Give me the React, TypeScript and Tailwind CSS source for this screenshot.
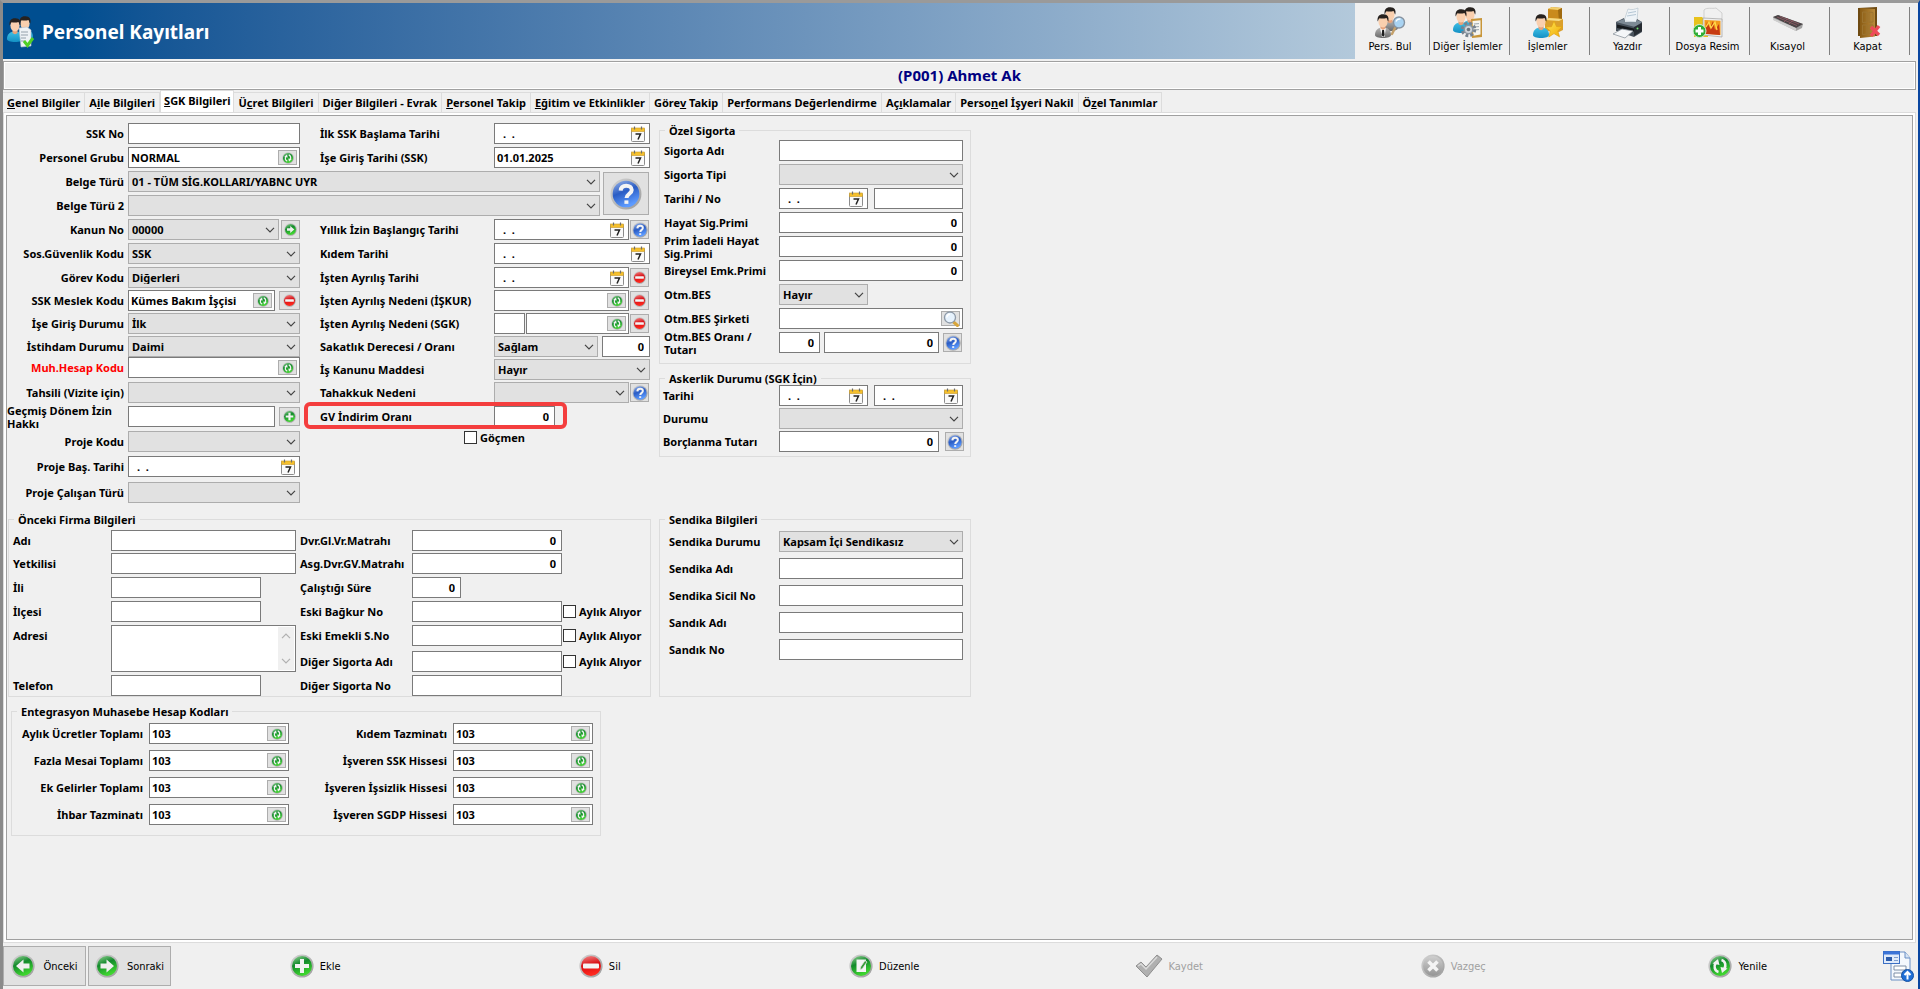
/**
 * Personel Kayıtları ekranı - SGK Bilgileri sekmesi.
 *
 * - Üstte başlık ve araç çubuğu, altında seçili personel.
 * - Ortada sekmeler ve form grupları.
 * - Altta kayıt gezinme / düzenleme düğmeleri.
 */

import { useId, type ReactNode } from 'react';

// ---- İkonlar ----

function Tanimlar() {
  return (
    <svg width="0" height="0" className="absolute" aria-hidden="true">
      <defs>
        <linearGradient id="yesil" x1="0" y1="0" x2="0.4" y2="1">
          <stop offset="0" stopColor="#9ad69a" />
          <stop offset="0.45" stopColor="#138a2c" />
          <stop offset="1" stopColor="#3fd62f" />
        </linearGradient>
        <linearGradient id="kirmizi" x1="0" y1="0" x2="0.2" y2="1">
          <stop offset="0" stopColor="#f28a8a" />
          <stop offset="0.5" stopColor="#d80d12" />
          <stop offset="1" stopColor="#ff2a20" />
        </linearGradient>
        <linearGradient id="mavi" x1="0" y1="0" x2="0.4" y2="1">
          <stop offset="0" stopColor="#9db8ea" />
          <stop offset="0.5" stopColor="#2a5cc4" />
          <stop offset="1" stopColor="#5d9bff" />
        </linearGradient>
        <linearGradient id="gri" x1="0" y1="0" x2="0" y2="1">
          <stop offset="0" stopColor="#cfcfcf" />
          <stop offset="1" stopColor="#959595" />
        </linearGradient>
        <linearGradient id="halka" x1="0" y1="0" x2="1" y2="1">
          <stop offset="0" stopColor="#d4d4d4" />
          <stop offset="1" stopColor="#9b9b9b" />
        </linearGradient>
        <linearGradient id="govde" x1="0" y1="0" x2="0" y2="1">
          <stop offset="0" stopColor="#3fc0e6" />
          <stop offset="1" stopColor="#1390c4" />
        </linearGradient>
        <linearGradient id="takim" x1="0" y1="0" x2="0" y2="1">
          <stop offset="0" stopColor="#b4b4b4" />
          <stop offset="1" stopColor="#6a6a6a" />
        </linearGradient>
        <linearGradient id="altin" x1="0" y1="0" x2="1" y2="1">
          <stop offset="0" stopColor="#ffe95a" />
          <stop offset="1" stopColor="#f0a800" />
        </linearGradient>
        <linearGradient id="kapi" x1="0" y1="0" x2="1" y2="0">
          <stop offset="0" stopColor="#8a5c14" />
          <stop offset="1" stopColor="#b98a3a" />
        </linearGradient>
      </defs>
    </svg>
  );
}

type OrbTuru = 'yenile' | 'ileri' | 'geri' | 'ekle' | 'sil' | 'soru' | 'duzenle' | 'vazgec';

const orbRenk: Record<OrbTuru, string> = {
  yenile: 'url(#yesil)',
  ileri: 'url(#yesil)',
  geri: 'url(#yesil)',
  ekle: 'url(#yesil)',
  duzenle: 'url(#yesil)',
  sil: 'url(#kirmizi)',
  soru: 'url(#mavi)',
  vazgec: 'url(#gri)',
};

function Orb({ tur, className = 'size-3' }: { tur: OrbTuru; className?: string }) {
  return (
    <svg viewBox="0 0 24 24" className={`shrink-0 ${className}`} aria-hidden="true">
      <circle cx="12" cy="12" r="11.6" fill="url(#halka)" />
      <circle cx="12" cy="12" r="10" fill={orbRenk[tur]} />
      {tur === 'yenile' && (
        <g>
          <path d="M10.5 18C6.500 17 5.500 12 8 8.500M13.500 6c4 1 5 6 2.500 9.500" fill="none" stroke="#f2f2f2" strokeWidth="2.600" />
          <path d="M4.500 9.500L10 5l1.500 6zM19.500 14.500L14 19l-1.500-6z" fill="#f2f2f2" />
        </g>
      )}
      {tur === 'ileri' && <path d="M5.500 9.500h6v-4L19 12l-7.500 6.500v-4h-6z" fill="#f0f0f0" />}
      {tur === 'geri' && <path d="M18.500 9.500h-6v-4L5 12l7.500 6.500v-4h6z" fill="#f0f0f0" />}
      {tur === 'ekle' && <path d="M10 5h4v5h5v4h-5v5h-4v-5H5v-4h5z" fill="#f2f2f2" />}
      {tur === 'sil' && <rect x="4" y="9.500" width="16" height="5" rx="1" fill="#f4f4f4" />}
      {tur === 'soru' && (
        <g fill="none" stroke="#f4f4f4" strokeWidth="3">
          <path d="M8 9.500c.2-2.500 2-3.700 4.200-3.700 2.400 0 4.100 1.200 4.100 3.200 0 2.800-3.700 2.800-3.900 6" />
          <path d="M12.300 16.800v2.600" />
        </g>
      )}
      {tur === 'duzenle' && (
        <g>
          <path d="M7.500 5.500H17V18H7.500z" fill="#f4f4f4" />
          <path d="M11 16l.5-3L16 6.500l2 1.500-4.500 6.500z" fill="#3c9c3c" stroke="#e9e9e9" strokeWidth="0.800" />
        </g>
      )}
      {tur === 'vazgec' && (
        <path d="M7.500 7.500l9 9M16.500 7.500l-9 9" stroke="#f4f4f4" strokeWidth="3.600" fill="none" />
      )}
    </svg>
  );
}

function Kisi({ x = 0, y = 0, govde = 'url(#govde)' }: { x?: number; y?: number; govde?: string }) {
  return (
    <g transform={`translate(${x} ${y})`}>
      <path d="M0 21c0-5 3-7.500 8-7.500s8 2.500 8 7.500c0 2-3.500 3-8 3s-8-1-8-3z" fill={govde} />
      <path d="M5.500 11h5v4c-1.500 1.500-3.500 1.500-5 0z" fill="#e7a27a" />
      <ellipse cx="8" cy="7.500" rx="4.600" ry="6" fill="#f9cfae" />
      <path d="M2.600 7.500C2 2.500 4.500 0 8.500.3c4.200.2 5.800 3 4.800 7.200-1-.8-1-2.500-1.800-3.500-2.500.8-5 .7-7 .2-1 .8-1.100 2.300-1.900 3.300z" fill="#27221f" />
    </g>
  );
}

function BaslikIkonu() {
  return (
    <svg viewBox="0 0 32 32" className="size-8 shrink-0" aria-hidden="true">
      <Kisi x={11} y={0} />
      <Kisi x={1} y={2} />
      <path d="M13 12l8-1 4 3v16l-10 1z" fill="#eef2f6" stroke="#b5bec7" strokeWidth="0.600" />
      <path d="M15 16h7M15 19h7M15 22h5M15 25h4" stroke="#94a0ab" strokeWidth="1" />
      <path d="M18 25l3.500 4.500L27 22" stroke="#4fcf25" strokeWidth="3" fill="none" />
    </svg>
  );
}

function PersBulIkonu() {
  return (
    <svg viewBox="0 0 32 32" className="size-8" aria-hidden="true">
      <Kisi x={8} y={0} govde="url(#takim)" />
      <Kisi x={1} y={7} govde="url(#takim)" />
      <path d="M6 21l3 2 3-2-1.500 9H8z" fill="#f4f4f4" />
      <path d="M8.200 23h1.800l.6 5-1.500 2-1.500-2z" fill="#1c1c1c" />
      <path d="M21 21l-3 6" stroke="#c4a06a" strokeWidth="2.500" strokeLinecap="round" />
      <circle cx="25" cy="15.500" r="5.500" fill="#a9d3f2" stroke="#8793a0" strokeWidth="1.400" />
      <path d="M22 14.500c.8-2 2.500-2.800 4.500-2.300" stroke="#fff" strokeWidth="1.300" fill="none" />
    </svg>
  );
}

function DigerIslemlerIkonu() {
  return (
    <svg viewBox="0 0 32 32" className="size-8" aria-hidden="true">
      <Kisi x={10} y={0} />
      <Kisi x={1} y={2} />
      <path d="M19 12l11-1v19l-10 1z" fill="#c8963a" />
      <path d="M20.500 14l8-.8v14.300l-7 1.200z" fill="#f5f5f0" />
      <path d="M22 17l5-.4M22 20l5-.4M22 23l5-.4" stroke="#9aa5ad" />
      <circle cx="16.500" cy="22.500" r="6" fill="none" stroke="#77838f" strokeWidth="3.500" strokeDasharray="2.700 2" />
      <circle cx="16.500" cy="22.500" r="4.300" fill="#cfd6dc" stroke="#8b96a0" strokeWidth="1.500" />
      <circle cx="16.500" cy="22.500" r="1.800" fill="#6a747d" />
    </svg>
  );
}

function IslemlerIkonu() {
  return (
    <svg viewBox="0 0 32 32" className="size-8" aria-hidden="true">
      <path d="M16 2l4-2 10 1v11l-3 2-11-1z" fill="#c98a1c" />
      <path d="M16 2l4-2 10 1-4 2z" fill="#f2cf6d" />
      <path d="M26 3l4-2v11l-3 2z" fill="#a06a10" />
      <path d="M13 13l4-2 14 1v11l-4 2-14-1z" fill="#dba02c" />
      <path d="M13 13l4-2 14 1-4 2z" fill="#f7dc86" />
      <Kisi x={1} y={7} />
      <path d="M22 14l2.500 5.500 6 .3-4.700 4 1.700 6-5.500-3.200-5.200 3.400 1.500-6.100-4.800-3.800 6-.4z" fill="url(#altin)" stroke="#e0a010" strokeWidth="0.700" />
    </svg>
  );
}

function YaziciIkonu() {
  return (
    <svg viewBox="0 0 32 32" className="size-8" aria-hidden="true">
      <path d="M12 14l4-12c4 1.500 7 0 10-1l-1 14z" fill="#eef3f7" stroke="#b9c6cf" strokeWidth="0.700" />
      <path d="M16 6l8-1.500M15 9l9-1.500" stroke="#b4c6d4" strokeWidth="1" />
      <path d="M4 15l8-4 1 4h11l1-3 5 3v10l-8 5-18-6z" fill="#48525c" />
      <path d="M4 15l8-3 1 3h11l1-2 5 2-7 5z" fill="#7d8a95" />
      <path d="M5 17.500l17 4v3L5 21z" fill="#15191d" />
      <path d="M22 20l8-4v8l-8 5z" fill="#262c32" />
      <path d="M1 27l9-5 11 2-8 7z" fill="#f4f6f8" stroke="#8e979f" strokeWidth="0.800" />
      <circle cx="25.500" cy="21.500" r="1" fill="#70e070" />
    </svg>
  );
}

function DosyaResimIkonu() {
  return (
    <svg viewBox="0 0 32 32" className="size-8" aria-hidden="true">
      <path d="M2 10h8l2 2h4v18H2z" fill="#e8c21c" />
      <path d="M12 3c3-3 8-1 12-2l6 5v9H12z" fill="#f0f0f0" stroke="#c2c2c2" strokeWidth="0.700" />
      <path d="M11 11l19 1v18l-19-2z" fill="#eeeeee" stroke="#a0a0a0" strokeWidth="0.700" />
      <path d="M12.500 13l16 .8V28l-16-1.500z" fill="#f29a1c" />
      <path d="M13 24l2-9 3 6 3-7 2 9 4-6 1 11-14-1z" fill="#c73a12" />
      <path d="M14 20l3-5 2 6 4-6 2 8" stroke="#ffd84a" strokeWidth="1.300" fill="none" />
      <circle cx="7.500" cy="24" r="6.500" fill="#2fae35" stroke="#d5ecd5" />
      <path d="M6 20h3v2.500h2.500v3H9V28H6v-2.500H3.500v-3H6z" fill="#fff" />
    </svg>
  );
}

function KisayolIkonu() {
  return (
    <svg viewBox="0 0 32 32" className="size-8" aria-hidden="true">
      <path d="M1 10l5-2 25 9-1 4-6 3L2 13z" fill="#a2a2a2" />
      <path d="M1 10l5-2 25 9-7 4z" fill="#4a4446" />
      <path d="M5 10l20 8.500M8 9.500l19 7.500M12 15l4-4M17 17l4-4" stroke="#8d5a62" strokeWidth="0.900" />
      <path d="M1 11v2l23 11v-3z" fill="#cfcfcf" />
    </svg>
  );
}

function KapatIkonu() {
  return (
    <svg viewBox="0 0 32 32" className="size-8" aria-hidden="true">
      <path d="M6 1l19-1v29H6z" fill="#6e4a12" />
      <path d="M8 1l15 1v27.500L8 31z" fill="url(#kapi)" />
      <path d="M10.500 5l4.500.2v10l-4.500.3zM17 5.200l4 .3V15l-4 .2zM10.500 18H15v9l-4.500.6zM17 18h4v8.500l-4 .4z" fill="none" stroke="#9c7430" strokeWidth="1" />
      <path d="M19 20l8 8M27 19l-8 10" stroke="#ee4a58" strokeWidth="3.400" />
    </svg>
  );
}

function TakvimIkonu() {
  return (
    <svg viewBox="0 0 14 16" className="h-4 w-3.5 shrink-0" aria-hidden="true">
      <rect x="0.500" y="2.500" width="13" height="13" rx="1" fill="#fafafa" stroke="#8c8c8c" />
      <rect x="0.500" y="2" width="13" height="3.500" fill="#f6c02c" stroke="#c79a2c" strokeWidth="0.600" />
      <path d="M3.500 0.500v3M10.500 0.500v3" stroke="#6e6e6e" strokeWidth="1.200" />
      <path d="M4.500 8h5L7 13.500" fill="none" stroke="#222" strokeWidth="1.500" />
    </svg>
  );
}

function BuyutecIkonu() {
  return (
    <svg viewBox="0 0 18 16" className="h-4 w-4.5 shrink-0" aria-hidden="true">
      <path d="M11.500 11l4 3.500" stroke="#d8a63c" strokeWidth="3" strokeLinecap="round" />
      <circle cx="8" cy="6.500" r="5.500" fill="#e6f2fd" stroke="#8e9aa8" strokeWidth="1.300" />
      <path d="M4.800 6.500C5 4.500 6.300 3.300 8 3.200" stroke="#fff" strokeWidth="1.400" fill="none" />
    </svg>
  );
}

function OkAsagi({ className = 'stroke-[#444]' }: { className?: string }) {
  return (
    <svg viewBox="0 0 10 6" className={`h-1.5 w-2.5 fill-none ${className}`} aria-hidden="true">
      <path d="M1 0.800l4 4 4-4" strokeWidth="1.200" />
    </svg>
  );
}

function OnayIkonu() {
  return (
    <svg viewBox="0 0 28 24" className="h-6 w-7" aria-hidden="true">
      <path d="M1 12l5-4 5 5L22 1l5 4-15 18z" fill="#b0b0b0" stroke="#8f8f8f" />
      <path d="M3 12l3-2 5 5L22 3" fill="none" stroke="#dadada" strokeWidth="1.500" />
    </svg>
  );
}

function FormIkonu() {
  return (
    <svg viewBox="0 0 32 32" className="size-8" aria-hidden="true">
      <path d="M9 2h14l5 6v22H9z" fill="#f4f8fd" stroke="#6a8fc4" />
      <path d="M23 2v6h5" fill="#d6e4f5" stroke="#6a8fc4" />
      <path d="M12 16h12v4H12zM12 23h9v4h-9z" fill="#fff" stroke="#7f8fa6" />
      <rect x="1.500" y="1.500" width="16" height="12" fill="#dfeafa" stroke="#3b6fc4" />
      <rect x="1.500" y="1.500" width="16" height="3" fill="#3b74d8" />
      <rect x="4" y="7" width="6" height="4" fill="#2c5cab" />
      <path d="M12 7.500h4M12 10.500h4" stroke="#7f9fd0" />
      <circle cx="25.500" cy="25.500" r="6" fill="#1f6fd6" stroke="#1550a0" />
      <path d="M25.500 29.500v-7M22.500 25l3-3 3 3" stroke="#fff" strokeWidth="2" fill="none" />
    </svg>
  );
}

// ---- Form elemanları ----

function Alan({
  id,
  deger = '',
  sag = false,
  etiket,
  ek,
  className = 'w-full',
}: {
  id?: string;
  deger?: string;
  sag?: boolean;
  etiket?: string;
  ek?: ReactNode;
  className?: string;
}) {
  return (
    <div className={`flex h-[21px] shrink-0 items-center border border-[#7a7a7a] bg-white pr-0.5 ${className}`}>
      <input
        id={id}
        type="text"
        aria-label={etiket}
        defaultValue={deger}
        className={`h-full w-full min-w-0 bg-transparent outline-none ${sag ? 'pr-[3px] text-right' : 'pl-0.5'}`}
      />
      {ek}
    </div>
  );
}

function IcDugme({ children, etiket }: { children: ReactNode; etiket: string }) {
  return (
    <button
      type="button"
      aria-label={etiket}
      className="flex h-[15px] w-[19px] shrink-0 items-center justify-center border border-[#adadad] bg-[#e1e1e1]"
    >
      {children}
    </button>
  );
}

function SecimAlani(props: { id?: string; deger?: string; etiket?: string; className?: string }) {
  return (
    <Alan
      {...props}
      ek={
        <IcDugme etiket="Listeden seç">
          <Orb tur="yenile" />
        </IcDugme>
      }
    />
  );
}

function Tarih({ id, deger, etiket, className = 'w-full' }: { id?: string; deger?: string; etiket?: string; className?: string }) {
  return (
    <div className={`flex h-[21px] shrink-0 items-center border border-[#7a7a7a] bg-white pr-1 ${className}`}>
      <input
        id={id}
        type="text"
        aria-label={etiket}
        defaultValue={deger ?? '.  .'}
        className={`h-full w-full min-w-0 bg-transparent outline-none ${deger ? 'pl-0.5' : 'pl-2'}`}
      />
      <button type="button" aria-label="Takvim">
        <TakvimIkonu />
      </button>
    </div>
  );
}

function Secim({ id, deger = '', etiket, className = 'w-full' }: { id?: string; deger?: string; etiket?: string; className?: string }) {
  return (
    <div className={`relative h-[21px] shrink-0 ${className}`}>
      <select
        id={id}
        aria-label={etiket}
        defaultValue={deger}
        className="block h-full w-full appearance-none border border-[#adadad] bg-[#e1e1e1] pl-[3px] outline-none"
      >
        <option value={deger}>{deger}</option>
      </select>
      <span className="pointer-events-none absolute inset-y-0 right-1 flex items-center">
        <OkAsagi />
      </span>
    </div>
  );
}

function YanDugme({ tur, etiket, className = 'w-[19px]' }: { tur: OrbTuru; etiket: string; className?: string }) {
  return (
    <button
      type="button"
      aria-label={etiket}
      className={`flex h-[19px] shrink-0 items-center justify-center border border-[#adadad] bg-[#e1e1e1] ${className}`}
    >
      <Orb tur={tur} className={tur === 'soru' ? 'size-4' : 'size-[13px]'} />
    </button>
  );
}

function Onay({ children, className = '' }: { children: ReactNode; className?: string }) {
  return (
    <label className={`flex h-[21px] items-center gap-[3px] whitespace-nowrap ${className}`}>
      <input type="checkbox" className="size-[13px] shrink-0 appearance-none border border-[#333] bg-white" />
      {children}
    </label>
  );
}

/** Etiket + alan çifti; ızgaranın iki hücresini doldurur. */
function Satir({
  etiket,
  sag = false,
  kirmizi = false,
  children,
}: {
  etiket: string;
  sag?: boolean;
  kirmizi?: boolean;
  children: (id: string) => ReactNode;
}) {
  const id = useId();
  return (
    <>
      <label
        htmlFor={id}
        className={`flex h-[21px] items-center leading-[13px] ${sag ? 'justify-end' : ''} ${kirmizi ? 'text-[#ff0000]' : ''}`}
      >
        {etiket}
      </label>
      <div className="flex h-[21px] items-center">{children(id)}</div>
    </>
  );
}

function Grup({ baslik, className = '', children }: { baslik: string; className?: string; children: ReactNode }) {
  return (
    <fieldset className={`min-w-0 border border-[#dcdcdc] ${className}`}>
      <legend className="ml-[5px] px-1 leading-[13px]">{baslik}</legend>
      {children}
    </fieldset>
  );
}

// ---- Üst bölüm ----

const araclar = [
  { ad: 'Pers. Bul', ikon: <PersBulIkonu />, genislik: 'w-[75px]' },
  { ad: 'Diğer İşlemler', ikon: <DigerIslemlerIkonu />, genislik: 'w-20' },
  { ad: 'İşlemler', ikon: <IslemlerIkonu />, genislik: 'w-20' },
  { ad: 'Yazdır', ikon: <YaziciIkonu />, genislik: 'w-20' },
  { ad: 'Dosya Resim', ikon: <DosyaResimIkonu />, genislik: 'w-20' },
  { ad: 'Kısayol', ikon: <KisayolIkonu />, genislik: 'w-20' },
  { ad: 'Kapat', ikon: <KapatIkonu />, genislik: 'w-20' },
];

function UstBar() {
  return (
    <header className="flex h-14 bg-[#f0f0f0]">
      <div className="flex flex-1 items-center gap-1 bg-linear-to-r from-[#004e90] from-5% to-[#b3c9db] pt-0.5 pl-[3px]">
        <BaslikIkonu />
        <h1 className="text-[19px] font-bold text-white">Personel Kayıtları</h1>
      </div>
      <nav className="flex items-center pr-2 font-normal">
        {araclar.map((a) => (
          <button
            key={a.ad}
            type="button"
            className={`flex h-12 flex-col items-center border-r border-[#808080] pr-1 whitespace-nowrap ${a.genislik}`}
          >
            {a.ikon}
            <span className="font-['DejaVu_Sans_Condensed','Noto_Sans',sans-serif] leading-4">{a.ad}</span>
          </button>
        ))}
      </nav>
    </header>
  );
}

// [altı çizili harften önce, altı çizili harf, sonrası]
const sekmeler: [string, string, string][] = [
  ['', 'G', 'enel Bilgiler'],
  ['A', 'i', 'le Bilgileri'],
  ['', 'S', 'GK Bilgileri'],
  ['Ü', 'c', 'ret Bilgileri'],
  ['Di', 'ğ', 'er Bilgileri - Evrak'],
  ['', 'P', 'ersonel Takip'],
  ['', 'E', 'ğitim ve Etkinlikler'],
  ['Göre', 'v', ' Takip'],
  ['Per', 'f', 'ormans Değerlendirme'],
  ['Aç', 'ı', 'klamalar'],
  ['Perso', 'n', 'el İşyeri Nakil'],
  ['Ö', 'z', 'el Tanımlar'],
];

function Sekmeler() {
  return (
    <div role="tablist" className="flex h-[22px] items-end">
      {sekmeler.map(([once, harf, sonra], i) => (
        <button
          key={once + harf + sonra}
          type="button"
          role="tab"
          aria-selected={i === 2}
          className={
            i === 2
              ? 'h-[22px] border border-b-0 border-[#dcdcdc] bg-white px-[3px] pb-0.5 whitespace-nowrap'
              : 'h-5 border-t border-r border-[#dcdcdc] px-1 whitespace-nowrap'
          }
        >
          {once}
          <span className="underline">{harf}</span>
          {sonra}
        </button>
      ))}
    </div>
  );
}

// ---- Form grupları ----

function SgkFormu() {
  const belge = useId();
  const belge2 = useId();
  return (
    <div className="pt-[7px]">
      <div className="flex gap-5">
        <div className="grid auto-rows-[24px] grid-cols-[117px_172px] gap-x-1">
          <Satir etiket="SSK No" sag>{(id) => <Alan id={id} />}</Satir>
          <Satir etiket="Personel Grubu" sag>{(id) => <SecimAlani id={id} deger="NORMAL" />}</Satir>
        </div>
        <div className="grid auto-rows-[24px] grid-cols-[174px_156px]">
          <Satir etiket="İlk SSK Başlama Tarihi">{(id) => <Tarih id={id} />}</Satir>
          <Satir etiket="İşe Giriş Tarihi (SSK)">{(id) => <Tarih id={id} deger="01.01.2025" />}</Satir>
        </div>
      </div>

      <div className="flex">
        <div className="grid auto-rows-[24px] grid-cols-[117px_472px] gap-x-1">
          <label htmlFor={belge} className="flex h-[21px] items-center justify-end">Belge Türü</label>
          <Secim id={belge} deger="01 - TÜM SİG.KOLLARI/YABNC UYR" />
          <label htmlFor={belge2} className="flex h-[21px] items-center justify-end">Belge Türü 2</label>
          <Secim id={belge2} />
        </div>
        <button
          type="button"
          aria-label="Yardım"
          className="mt-px ml-[3px] flex h-[43px] w-[46px] items-center justify-center border border-[#adadad] bg-[#e1e1e1]"
        >
          <Orb tur="soru" className="size-8" />
        </button>
      </div>

      <div className="flex gap-5">
        <div className="grid grid-cols-[117px_172px] grid-rows-[24px_24px_23px_23px_23px_21px_25px_24px_25px_25px_26px_21px] gap-x-1">
          <Satir etiket="Kanun No" sag>
            {(id) => (
              <>
                <Secim id={id} deger="00000" className="w-[151px]" />
                <YanDugme tur="ileri" etiket="Kanuna git" className="ml-0.5 w-[19px]" />
              </>
            )}
          </Satir>
          <Satir etiket="Sos.Güvenlik Kodu" sag>{(id) => <Secim id={id} deger="SSK" />}</Satir>
          <Satir etiket="Görev Kodu" sag>{(id) => <Secim id={id} deger="Diğerleri" />}</Satir>
          <Satir etiket="SSK Meslek Kodu" sag>
            {(id) => (
              <>
                <SecimAlani id={id} deger="Kümes Bakım İşçisi" className="w-[147px]" />
                <YanDugme tur="sil" etiket="Meslek kodunu sil" className="ml-1 w-[21px]" />
              </>
            )}
          </Satir>
          <Satir etiket="İşe Giriş Durumu" sag>{(id) => <Secim id={id} deger="İlk" />}</Satir>
          <Satir etiket="İstihdam Durumu" sag>{(id) => <Secim id={id} deger="Daimi" />}</Satir>
          <Satir etiket="Muh.Hesap Kodu" sag kirmizi>{(id) => <SecimAlani id={id} />}</Satir>
          <Satir etiket="Tahsili (Vizite için)" sag>{(id) => <Secim id={id} />}</Satir>
          <Satir etiket="Geçmiş Dönem İzin Hakkı" sag>
            {(id) => (
              <>
                <Alan id={id} className="w-[147px]" />
                <YanDugme tur="ekle" etiket="İzin ekle" className="ml-1 w-[21px]" />
              </>
            )}
          </Satir>
          <Satir etiket="Proje Kodu" sag>{(id) => <Secim id={id} />}</Satir>
          <Satir etiket="Proje Baş. Tarihi" sag>{(id) => <Tarih id={id} />}</Satir>
          <Satir etiket="Proje Çalışan Türü" sag>{(id) => <Secim id={id} />}</Satir>
        </div>

        <div>
          <div className="grid grid-cols-[174px_156px] grid-rows-[24px_24px_23px_23px_23px_23px_23px_24px]">
            <Satir etiket="Yıllık İzin Başlangıç Tarihi">
              {(id) => (
                <>
                  <Tarih id={id} className="w-[135px]" />
                  <YanDugme tur="soru" etiket="Yardım" className="ml-px w-[19px]" />
                </>
              )}
            </Satir>
            <Satir etiket="Kıdem Tarihi">{(id) => <Tarih id={id} />}</Satir>
            <Satir etiket="İşten Ayrılış Tarihi">
              {(id) => (
                <>
                  <Tarih id={id} className="w-[135px]" />
                  <YanDugme tur="sil" etiket="Tarihi sil" className="ml-px w-[19px]" />
                </>
              )}
            </Satir>
            <Satir etiket="İşten Ayrılış Nedeni (İŞKUR)">
              {(id) => (
                <>
                  <SecimAlani id={id} className="w-[135px]" />
                  <YanDugme tur="sil" etiket="Nedeni sil" className="ml-px w-[19px]" />
                </>
              )}
            </Satir>
            <Satir etiket="İşten Ayrılış Nedeni (SGK)">
              {(id) => (
                <>
                  <Alan id={id} className="w-[31px]" />
                  <SecimAlani etiket="SGK neden açıklaması" className="ml-px w-[103px]" />
                  <YanDugme tur="sil" etiket="Nedeni sil" className="ml-px w-[19px]" />
                </>
              )}
            </Satir>
            <Satir etiket="Sakatlık Derecesi / Oranı">
              {(id) => (
                <>
                  <Secim id={id} deger="Sağlam" className="w-[104px]" />
                  <Alan etiket="Sakatlık oranı" deger="0" sag className="ml-1 w-12" />
                </>
              )}
            </Satir>
            <Satir etiket="İş Kanunu Maddesi">{(id) => <Secim id={id} deger="Hayır" />}</Satir>
            <Satir etiket="Tahakkuk Nedeni">
              {(id) => (
                <>
                  <Secim id={id} className="w-[135px]" />
                  <YanDugme tur="soru" etiket="Yardım" className="ml-px w-[19px]" />
                </>
              )}
            </Satir>
          </div>
          {/* Vurgulanan satır */}
          <div className="relative grid grid-cols-[174px_156px]">
            <Satir etiket="GV İndirim Oranı">{(id) => <Alan id={id} deger="0" sag className="w-[61px]" />}</Satir>
            <span className="pointer-events-none absolute -top-1 right-[83px] -bottom-0.5 -left-4 rounded-md border-4 border-[#f43e3e]" />
          </div>
          <Onay className="ml-36">Göçmen</Onay>
        </div>
      </div>
    </div>
  );
}

function OncekiFirma() {
  return (
    <Grup baslik="Önceki Firma Bilgileri" className="mt-2.5 ml-px">
      <div className="grid grid-cols-[98px_189px_112px_151px_auto] grid-rows-[23px_24px_24px_24px_26px_24px_21px] pt-1 pl-1">
        <Satir etiket="Adı">{(id) => <Alan id={id} className="w-[185px]" />}</Satir>
        <Satir etiket="Dvr.Gl.Vr.Matrahı">{(id) => <Alan id={id} deger="0" sag className="w-[150px]" />}</Satir>
        <span />
        <Satir etiket="Yetkilisi">{(id) => <Alan id={id} className="w-[185px]" />}</Satir>
        <Satir etiket="Asg.Dvr.GV.Matrahı">{(id) => <Alan id={id} deger="0" sag className="w-[150px]" />}</Satir>
        <span />
        <Satir etiket="İli">{(id) => <Alan id={id} className="w-[150px]" />}</Satir>
        <Satir etiket="Çalıştığı Süre">{(id) => <Alan id={id} deger="0" sag className="w-[49px]" />}</Satir>
        <span />
        <Satir etiket="İlçesi">{(id) => <Alan id={id} className="w-[150px]" />}</Satir>
        <Satir etiket="Eski Bağkur No">{(id) => <Alan id={id} className="w-[150px]" />}</Satir>
        <Onay>Aylık Alıyor</Onay>
        <label htmlFor="adres" className="row-span-2 flex h-[21px] items-center">Adresi</label>
        <div className="row-span-2 flex h-[47px] w-[185px] border border-[#7a7a7a] bg-white p-px">
          <textarea id="adres" className="min-w-0 flex-1 resize-none overflow-hidden outline-none" />
          <span className="flex w-4 flex-col items-center justify-between bg-[#f0f0f0] py-1.5">
            <OkAsagi className="rotate-180 stroke-[#b0b0b0]" />
            <OkAsagi className="stroke-[#b0b0b0]" />
          </span>
        </div>
        <Satir etiket="Eski Emekli S.No">{(id) => <Alan id={id} className="w-[150px]" />}</Satir>
        <Onay>Aylık Alıyor</Onay>
        <Satir etiket="Diğer Sigorta Adı">{(id) => <Alan id={id} className="w-[150px]" />}</Satir>
        <Onay>Aylık Alıyor</Onay>
        <Satir etiket="Telefon">{(id) => <Alan id={id} className="w-[150px]" />}</Satir>
        <Satir etiket="Diğer Sigorta No">{(id) => <Alan id={id} className="w-[150px]" />}</Satir>
      </div>
    </Grup>
  );
}

const hesaplar = [
  ['Aylık Ücretler Toplamı', 'Kıdem Tazminatı'],
  ['Fazla Mesai Toplamı', 'İşveren SSK Hissesi'],
  ['Ek Gelirler Toplamı', 'İşveren İşsizlik Hissesi'],
  ['İhbar Tazminatı', 'İşveren SGDP Hissesi'],
];

function Entegrasyon() {
  return (
    <Grup baslik="Entegrasyon Muhasebe Hesap Kodları" className="mt-2 ml-1 w-[590px] pb-2.5">
      <div className="flex gap-2.5 pt-[5px]">
        {[0, 1].map((sutun) => (
          <div
            key={sutun}
            className={`grid gap-x-1.5 gap-y-1.5 ${sutun ? 'grid-cols-[148px_140px]' : 'grid-cols-[131px_140px]'}`}
          >
            {hesaplar.map((h) => (
              <Satir key={h[sutun]} etiket={h[sutun]} sag>
                {(id) => <SecimAlani id={id} deger="103" />}
              </Satir>
            ))}
          </div>
        ))}
      </div>
    </Grup>
  );
}

function OzelSigorta() {
  return (
    <Grup baslik="Özel Sigorta" className="pb-2.5">
      <div className="grid grid-cols-[115px_184px] gap-y-[3px] pt-[3px] pl-1">
        <Satir etiket="Sigorta Adı">{(id) => <Alan id={id} />}</Satir>
        <Satir etiket="Sigorta Tipi">{(id) => <Secim id={id} />}</Satir>
        <Satir etiket="Tarihi / No">
          {(id) => (
            <>
              <Tarih id={id} className="w-[89px]" />
              <Alan etiket="Sigorta No" className="ml-1.5 w-[89px]" />
            </>
          )}
        </Satir>
        <Satir etiket="Hayat Sig.Primi">{(id) => <Alan id={id} deger="0" sag />}</Satir>
        <Satir etiket="Prim İadeli Hayat Sig.Primi">{(id) => <Alan id={id} deger="0" sag />}</Satir>
        <Satir etiket="Bireysel Emk.Primi">{(id) => <Alan id={id} deger="0" sag />}</Satir>
        <Satir etiket="Otm.BES">{(id) => <Secim id={id} deger="Hayır" className="w-[89px]" />}</Satir>
        <Satir etiket="Otm.BES Şirketi">
          {(id) => (
            <Alan
              id={id}
              ek={
                <IcDugme etiket="Şirket ara">
                  <BuyutecIkonu />
                </IcDugme>
              }
            />
          )}
        </Satir>
        <Satir etiket="Otm.BES Oranı / Tutarı">
          {(id) => (
            <>
              <Alan id={id} deger="0" sag className="w-[41px]" />
              <Alan etiket="BES tutarı" deger="0" sag className="ml-1 w-[115px]" />
              <YanDugme tur="soru" etiket="Yardım" className="ml-1 w-[19px]" />
            </>
          )}
        </Satir>
      </div>
    </Grup>
  );
}

function Askerlik() {
  return (
    <Grup baslik="Askerlik Durumu (SGK İçin)" className="mt-2 pb-1">
      <div className="grid grid-cols-[116px_184px] gap-y-0.5 pl-[3px]">
        <Satir etiket="Tarihi">
          {(id) => (
            <>
              <Tarih id={id} className="w-[89px]" />
              <Tarih etiket="Bitiş tarihi" className="ml-1.5 w-[89px]" />
            </>
          )}
        </Satir>
        <Satir etiket="Durumu">{(id) => <Secim id={id} />}</Satir>
        <Satir etiket="Borçlanma Tutarı">
          {(id) => (
            <>
              <Alan id={id} deger="0" sag className="w-40" />
              <YanDugme tur="soru" etiket="Yardım" className="ml-1.5 w-[19px]" />
            </>
          )}
        </Satir>
      </div>
    </Grup>
  );
}

function Sendika() {
  return (
    <Grup baslik="Sendika Bilgileri" className="mt-14 pb-9">
      <div className="grid grid-cols-[110px_184px] gap-y-1.5 pt-[5px] pl-[9px]">
        <Satir etiket="Sendika Durumu">{(id) => <Secim id={id} deger="Kapsam İçi Sendikasız" />}</Satir>
        <Satir etiket="Sendika Adı">{(id) => <Alan id={id} />}</Satir>
        <Satir etiket="Sendika Sicil No">{(id) => <Alan id={id} />}</Satir>
        <Satir etiket="Sandık Adı">{(id) => <Alan id={id} />}</Satir>
        <Satir etiket="Sandık No">{(id) => <Alan id={id} />}</Satir>
      </div>
    </Grup>
  );
}

// ---- Alt bar ----

const islemler: { ad: string; ikon: ReactNode; pasif?: boolean }[] = [
  { ad: 'Ekle', ikon: <Orb tur="ekle" className="size-6" /> },
  { ad: 'Sil', ikon: <Orb tur="sil" className="size-6" /> },
  { ad: 'Düzenle', ikon: <Orb tur="duzenle" className="size-6" /> },
  { ad: 'Kaydet', ikon: <OnayIkonu />, pasif: true },
  { ad: 'Vazgeç', ikon: <Orb tur="vazgec" className="size-6" />, pasif: true },
  { ad: 'Yenile', ikon: <Orb tur="yenile" className="size-6" /> },
];

function AltBar() {
  return (
    <footer className="flex items-center gap-0.5 pt-[3px] pr-1 pb-[3px] font-['DejaVu_Sans_Condensed','Noto_Sans',sans-serif] font-normal">
      <button type="button" className="flex h-10 w-[83px] items-center justify-center gap-2 border border-[#adadad] bg-[#e1e1e1]">
        <Orb tur="geri" className="size-6" />
        Önceki
      </button>
      <button type="button" className="flex h-10 w-[83px] items-center justify-center gap-2 border border-[#adadad] bg-[#e1e1e1]">
        <Orb tur="ileri" className="size-6" />
        Sonraki
      </button>
      <div className="flex flex-1">
        {islemler.map((i) => (
          <div key={i.ad} className="flex flex-1 justify-center">
            <button type="button" disabled={i.pasif} className="flex h-10 items-center gap-1.5 disabled:text-[#a0a0a0]">
              {i.ikon}
              {i.ad}
            </button>
          </div>
        ))}
      </div>
      <button type="button" aria-label="Form ayarları">
        <FormIkonu />
      </button>
    </footer>
  );
}

export default function App() {
  return (
    <div className="flex min-h-screen flex-col border-t-3 border-r-2 border-l-3 border-t-[#9a9a9a] border-r-[#0a46a0] border-l-[#8a8a8a] bg-[#f0f0f0] font-['Noto_Sans','Open_Sans',sans-serif] text-[11px] leading-[13px] font-bold text-black">
      <Tanimlar />
      <UstBar />

      <div className="mt-0.5 mr-0.5 border border-[#a0a0a0] bg-white p-px">
        <h2 className="bg-[#f0f0f0] text-center text-[15px] leading-[25px] text-[#000080]">(P001) Ahmet Ak</h2>
      </div>

      <Sekmeler />
      <div className="mr-0.5 flex flex-1 flex-col border border-[#dcdcdc] bg-white p-0.5">
        <main className="flex flex-1 gap-2 border border-[#a0a0a0] bg-[#f0f0f0]">
          <div className="w-[644px]">
            <SgkFormu />
            <OncekiFirma />
            <Entegrasyon />
          </div>
          <div className="w-[312px] pt-2">
            <OzelSigorta />
            <Askerlik />
            <Sendika />
          </div>
        </main>
      </div>

      <AltBar />
    </div>
  );
}
